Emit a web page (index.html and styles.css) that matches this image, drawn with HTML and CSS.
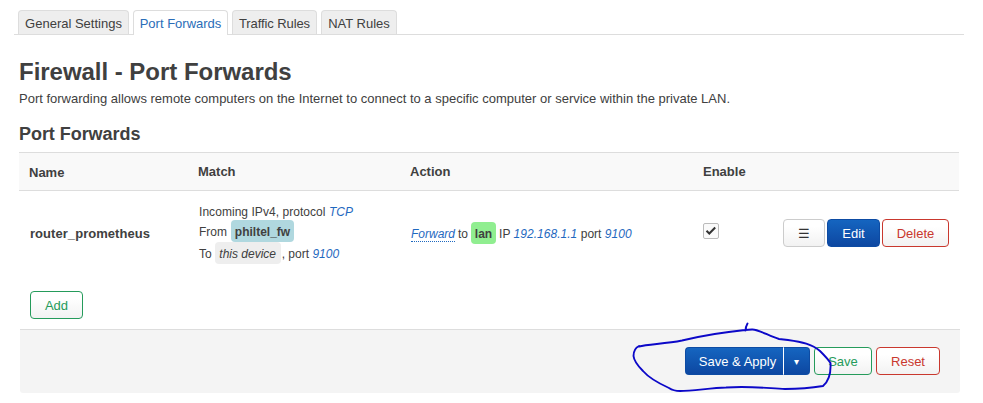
FILE: index.html
```html
<!DOCTYPE html>
<html lang="en">
<head>
<meta charset="utf-8">
<title>Firewall - Port Forwards</title>
<link rel="stylesheet" href="styles.css">
</head>
<body>
<nav class="tabs">
  <a class="tab tab-general">General Settings</a>
  <a class="tab tab-forwards active">Port Forwards</a>
  <a class="tab tab-traffic">Traffic Rules</a>
  <a class="tab tab-nat">NAT Rules</a>
</nav>
<main>
  <h2>Firewall - Port Forwards</h2>
  <p class="description"><span>Port forwarding allows remote computers on the Internet to connect to a specific computer or service within the private LAN.</span></p>
  <h3>Port Forwards</h3>
  <section class="table">
    <div class="row head">
      <div class="name">Name</div><div>Match</div><div>Action</div><div>Enable</div><div></div>
    </div>
    <div class="row rule">
      <div class="rule-name">router_prometheus</div>
      <div class="match">
        <div class="incoming">Incoming IPv4, protocol <var>TCP</var></div>
        <div class="line">From <span class="chip zone">philtel_fw</span></div>
        <div class="line">To <em class="chip device">this device</em><span class="port">, port <var>9100</var></span></div>
      </div>
      <div class="action"><var class="forward">Forward</var><span class="to">to</span><span class="chip lan">lan</span><span class="dest">IP <var>192.168.1.1</var> port <var>9100</var></span></div>
      <div class="enable"><span class="checkbox"><svg width="14" height="14" viewBox="0 0 14 14"><path d="M2.5 6.8 5.3 9.5 11.200 3.500" fill="none" stroke="#333" stroke-width="2"/></svg></span></div>
      <div class="buttons"><button class="btn drag">☰</button><button class="btn primary edit">Edit</button><button class="btn negative delete">Delete</button></div>
    </div>
  </section>
  <button class="btn positive add">Add</button>
</main>
<footer>
  <div class="split"><button class="btn primary apply">Save &amp; Apply</button><button class="btn primary arrow">▾</button></div>
  <button class="btn positive save">Save</button>
  <button class="btn negative reset">Reset</button>
  <svg class="scribble" width="210" height="75" viewBox="630 320 210 75"><path d="M747.500 323.500 Q745.500 327 745.500 330.500M639 346.500C648 344 665 344 682 340.500C705 335 725 332 745 330L752 329.500C758 329 769 336 779 339L788 340C802 342 812 344 820 351C825 356 828 359 830.500 363C831 372 830 380 823 386C811 388 795 389 785 389C765 388 750 386 726 387.500C710 388 693 391 680 391C676 391 672 390 669 388C658 383 649 378 643 371C637 365 634 361 633.500 356C633.500 351 635 348 639 346" fill="none" stroke="#0c08c8" stroke-width="1.900" stroke-linecap="round" stroke-linejoin="round"/></svg>
</footer>
</body>
</html>
```

FILE: styles.css
```css
* { box-sizing: border-box; }
body {
  margin: 0;
  width: 983px;
  height: 403px;
  overflow: hidden;
  background: #fff;
  color: #404040;
  font: 13px/18px "Liberation Sans", Arial, sans-serif;
}
.tabs {
  display: flex;
  gap: 4px;
  height: 35px;
  width: 950px;
  margin-left: 14px;
  padding: 10px 0 0 4px;
  border-bottom: 1px solid #ddd;
}
.tab {
  height: 24px;
  border: 1px solid #ddd;
  border-bottom: 0;
  border-radius: 4px 4px 0 0;
  background: #eee;
  line-height: 25px;
  text-align: center;
  white-space: nowrap;
}
.tab.active { height: 25px; background: #fff; color: #2a6db8; }
.tab-general { width: 111px; }
.tab-forwards { width: 95px; }
.tab-traffic { width: 85px; letter-spacing: -.1px; }
.tab-nat { width: 76px; }
main { padding-left: 19px; height: 294px; }
h2 { margin: 0; padding-top: 19px; font-size: 24px; line-height: 36px; letter-spacing: -.03px; }
.description { margin: 0; white-space: nowrap; }
h3 { margin: 8px 0 0; font-size: 18px; line-height: 36px; letter-spacing: -.05px; }
.table { width: 940px; }
.row {
  display: grid;
  grid-template-columns: 169px 212px 293px 80px 176px;
  padding-left: 10px;
}
.head {
  height: 39px;
  border: solid #ddd;
  border-width: 1px 0;
  background: #f9f9f9;
  font-weight: bold;
  line-height: 37px;
}
.head .name { padding-top: 1px; }
.rule { height: 100px; }
.rule-name { padding: 34px 0 0 1px; font-weight: bold; letter-spacing: .05px; }
.match { padding: 12px 0 0 1px; font-size: 12px; white-space: nowrap; }
.incoming { height: 17px; letter-spacing: .05px; }
.line { display: flex; height: 22px; line-height: 24px; }
var { color: #1f69c0; }
.chip { height: 22px; line-height: 24px; border-radius: 4px; text-align: center; }
.zone { width: 63px; margin-left: 4px; background: #b0d8df; font-weight: bold; }
.device { width: 66px; margin-left: 3px; background: #eee; }
.port { margin-left: 1px; }
.action { display: flex; height: 22px; margin-top: 31px; padding-left: 1px; font-size: 12px; line-height: 24px; white-space: nowrap; }
.forward { height: 20px; border-bottom: 1px dotted #1f69c0; }
.to { margin-left: 3px; }
.lan { width: 25px; margin-left: 3px; background: #90ee90; font-weight: bold; }
.dest { margin-left: 3px; letter-spacing: .03px; }
.enable { padding: 32px 0 0; }
.checkbox { display: flex; width: 16px; height: 16px; border: 1px solid #bbb; border-radius: 2px; background: #fafafa; }
.buttons { display: flex; gap: 2px; padding: 28px 0 0; }
.btn {
  height: 28px;
  padding: 1px 0 0;
  border: 1px solid #ccc;
  border-radius: 4px;
  background: linear-gradient(#fff 25%, #f2f2f2);
  color: #333;
  font: 13px/25px "Liberation Sans", Arial, sans-serif;
  white-space: nowrap;
}
.primary { border-color: #0d4ba3; background: linear-gradient(#1565c0, #0d47a1); color: #fff; }
.positive { border-color: #259b5b; color: #259b5b; }
.negative { border-color: #c9382e; color: #c9382e; }
.drag { width: 42px; }
.edit { width: 53px; }
.delete { width: 67px; }
.add { display: block; width: 53px; margin-left: 11px; }
footer {
  position: relative;
  display: flex;
  gap: 4px;
  width: 940px;
  height: 64px;
  margin-left: 20px;
  padding: 17px 20px 0 0;
  justify-content: flex-end;
  border-top: 1px solid #ddd;
  border-radius: 0 0 3px 3px;
  background: #f4f4f4;
}
.split { display: flex; }
.apply { width: 98px; padding-left: 6px; border-right: 0; border-radius: 4px 0 0 4px; }
.arrow { width: 27px; border-left: 1px solid #fff; border-radius: 0 4px 4px 0; font-size: 10px; }
.save { width: 58px; }
.reset { width: 64px; }
.scribble { position: absolute; left: 610px; top: -10px; }
```
